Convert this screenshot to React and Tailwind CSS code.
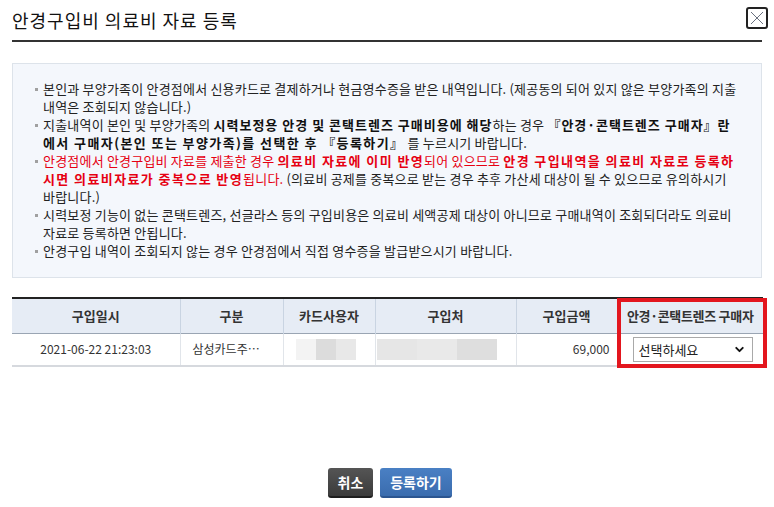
import React from "react";
import { ChevronDown } from "lucide-react";

const KR = { fontFamily: '"Noto Sans CJK KR", "Noto Sans", sans-serif' };

function Bullet({ children }) {
  return (
    <li className="flex items-start">
      <span className="mt-[8px] mr-[5px] h-[3px] w-[3px] shrink-0 bg-[#a0a0a0]" />
      <span className="whitespace-nowrap">{children}</span>
    </li>
  );
}

// bold text in the notice is set wider than the regular text
const B = ({ children, className = "tracking-[1.4px]" }) => (
  <b className={className}>{children}</b>
);

function CloseButton() {
  return (
    <button className="flex h-[22px] w-[22px] items-center justify-center rounded-[3px] border-[2px] border-[#222] bg-white">
      <svg width="14" height="14" viewBox="0 0 14 14">
        <path d="M1 1 L13 13 M13 1 L1 13" stroke="#6b7280" strokeWidth="1" />
      </svg>
    </button>
  );
}

function Blur({ w, shades }) {
  return (
    <div className="flex h-[21px]" style={{ width: w }}>
      {shades.map((c, i) => (
        <div key={i} className="h-full flex-1" style={{ background: c }} />
      ))}
    </div>
  );
}

export default function App() {
  return (
    <div className="min-h-[507px] w-[774px] bg-white px-[12px] text-[#222]" style={KR}>
      {/* title */}
      <div className="flex h-[40px] items-center justify-between">
        <h1 className="text-[18px] leading-none tracking-[1px] text-[#111]">안경구입비 의료비 자료 등록</h1>
        <div className="mr-[-6px] mb-[4px]">
          <CloseButton />
        </div>
      </div>
      <div className="h-[2px] w-full bg-[#333]" />

      {/* notice box */}
      <div className="mt-[21px] h-[215px] border border-[#dde3ea] bg-[#f4f7fc] pt-[16px] pl-[22px] text-[13px] leading-[18px] tracking-[0.2px]">
        <ul className="flex flex-col">
          <Bullet>
            본인과 부양가족이 안경점에서 신용카드로 결제하거나 현금영수증을 받은 내역입니다. (제공동의 되어 있지 않은 부양가족의 지출
            <br />
            내역은 조회되지 않습니다.)
          </Bullet>
          <Bullet>
            지출내역이 본인 및 부양가족의 <B className="tracking-[1px] text-[#111]">시력보정용 안경 및 콘택트렌즈 구매비용에 해당</B>하는 경우 <B className="tracking-[1px] text-[#111]">『안경·콘택트렌즈 구매자』란</B>
            <br />
            <B className="tracking-[1.4px] text-[#111]">에서 구매자(본인 또는 부양가족)를 선택한 후 『등록하기』</B> 를 누르시기 바랍니다.
          </Bullet>
          <Bullet>
            <span className="text-[#e60012]">
              안경점에서 안경구입비 자료를 제출한 경우 <B>의료비 자료에 이미 반영</B>되어 있으므로 <B>안경 구입내역을 의료비 자료로 등록하</B>
              <br />
              <B>시면 의료비자료가 중복으로 반영</B>됩니다.
            </span>{" "}
            (의료비 공제를 중복으로 받는 경우 추후 가산세 대상이 될 수 있으므로 유의하시기
            <br />
            바랍니다.)
          </Bullet>
          <Bullet>
            시력보정 기능이 없는 콘택트렌즈, 선글라스 등의 구입비용은 의료비 세액공제 대상이 아니므로 구매내역이 조회되더라도 의료비
            <br />
            자료로 등록하면 안됩니다.
          </Bullet>
          <Bullet>안경구입 내역이 조회되지 않는 경우 안경점에서 직접 영수증을 발급받으시기 바랍니다.</Bullet>
        </ul>
      </div>

      {/* table */}
      <div className="relative mt-[19px]">
        <table className="w-full table-fixed border-collapse text-[12px]">
          <colgroup>
            <col className="w-[168px]" />
            <col className="w-[103px]" />
            <col className="w-[92px]" />
            <col className="w-[141px]" />
            <col className="w-[101px]" />
            <col className="w-[146px]" />
          </colgroup>
          <thead>
            <tr className="h-[35px] border-t-[2px] border-[#222] bg-[#e6ecf5] text-[13px] font-bold text-[#333]">
              <th className="border-r border-[#c9d4e2]">구입일시</th>
              <th className="border-r border-[#c9d4e2]">구분</th>
              <th className="border-r border-[#c9d4e2]">카드사용자</th>
              <th className="border-r border-[#c9d4e2]">구입처</th>
              <th className="border-r border-[#c9d4e2]">구입금액</th>
              <th className="whitespace-nowrap tracking-[-0.3px]">안경·콘택트렌즈 구매자</th>
            </tr>
          </thead>
          <tbody>
            <tr className="h-[33px] border-t border-b-[2px] border-t-[#9aa5b3] border-b-[#d6d9de] text-[#333]">
              <td className="border-r border-[#e1e5ea] text-center">2021-06-22 21:23:03</td>
              <td className="border-r border-[#e1e5ea] pl-[12px]">삼성카드주…</td>
              <td className="border-r border-[#e1e5ea] pl-[12px]">
                <Blur w={60} shades={["#f3f3f3", "#dcdcdc", "#e8e8e8"]} />
              </td>
              <td className="border-r border-[#e1e5ea] pl-[1px]">
                <Blur w={120} shades={["#e6e6e6", "#e9e9e9", "#dedede"]} />
              </td>
              <td className="border-r border-[#e1e5ea] pr-[7px] text-right">69,000</td>
              <td className="pl-[15px]">
                <div className="flex h-[25px] w-[120px] items-center justify-between border border-[#a9a9a9] bg-white pr-[6px] pl-[5px] text-[13px] text-[#222]">
                  <span>선택하세요</span>
                  <ChevronDown size={13} strokeWidth={3.5} color="#111" />
                </div>
              </td>
            </tr>
          </tbody>
        </table>
        <div className="pointer-events-none absolute top-[1px] left-[605px] h-[70px] w-[150px] border-[4px] border-[#e3161e]" />
      </div>

      {/* buttons */}
      <div className="mt-[101px] flex justify-center gap-[7px] pl-[6px] text-[14px] font-bold text-white">
        <button className="h-[30px] w-[45px] rounded-[3px] border-b-[2px] border-[#1e1e1e] bg-gradient-to-b from-[#555] to-[#3b3b3b]">
          취소
        </button>
        <button className="h-[30px] w-[72px] rounded-[3px] border-b-[2px] border-[#2b5590] bg-gradient-to-b from-[#4a80c4] to-[#3a6cae]">
          등록하기
        </button>
      </div>
    </div>
  );
}
